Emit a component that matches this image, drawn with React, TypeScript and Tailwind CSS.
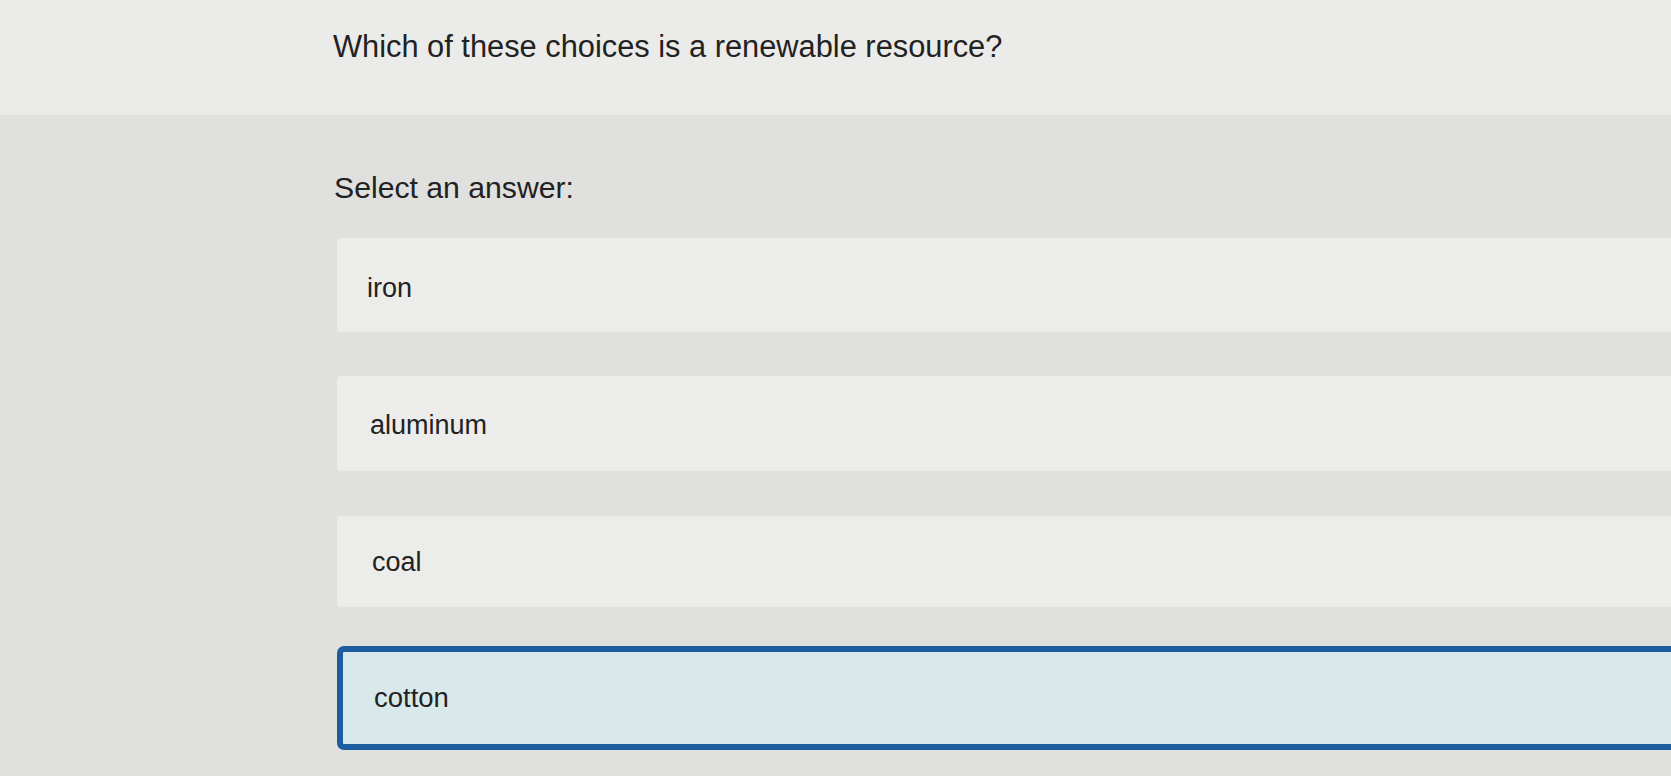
import React from "react";

const options = [
  { label: "iron", mt: "mt-[32px]", h: "h-[94px]", pl: "pl-[30px] pt-[5px]", sel: false },
  { label: "aluminum", mt: "mt-[44px]", h: "h-[95px]", pl: "pl-[33px] pt-[2px]", sel: false },
  { label: "coal", mt: "mt-[45px]", h: "h-[91px]", pl: "pl-[35px]", sel: false },
  { label: "cotton", mt: "mt-[39px]", h: "h-[104px]", pl: "pl-[33px]", sel: true },
];

export default function App() {
  return (
    <div className="w-[1671px] h-[776px] overflow-hidden bg-[#e0e0de] text-[#222222] font-['Liberation_Sans',Arial,sans-serif] flex flex-col">
      <div className="h-[115px] shrink-0 bg-[#ebebe9] pl-[333px] pt-[29px]">
        <h1 className="text-[30.8px] leading-[36px]">Which of these choices is a renewable resource?</h1>
      </div>
      <div className="pl-[334px] flex flex-col">
        <p className="mt-[55px] text-[30.2px] leading-[36px]">Select an answer:</p>
        <div className="flex flex-col">
          {options.map((o) =>
            o.sel ? (
              <div
                key={o.label}
                className={`${o.mt} ${o.h} w-[1400px] ml-[3px] rounded-[7px] border-[6px] border-[#1d5d9f] bg-[#d9e9eb] flex items-center pl-[31px]`}
              >
                <span className="text-[27.5px] leading-[32px]">{o.label}</span>
              </div>
            ) : (
              <div
                key={o.label}
                className={`${o.mt} ${o.h} w-[1400px] ml-[3px] rounded-l-[4px] bg-[#ececea] flex items-center ${o.pl}`}
              >
                <span className="text-[27px] leading-[32px]">{o.label}</span>
              </div>
            )
          )}
        </div>
      </div>
    </div>
  );
}
